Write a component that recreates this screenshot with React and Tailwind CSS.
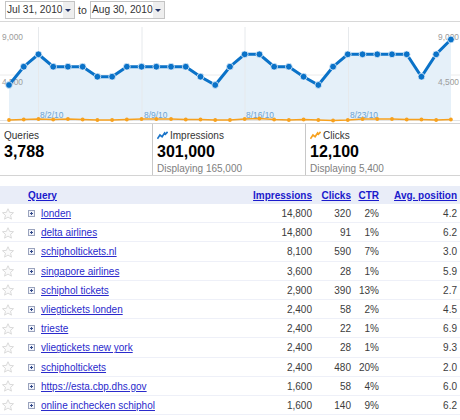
const xs = Array.from({ length: 31 }, (_, i) => 9 + i * 14.73);
const blueY = [85, 66.7, 54.3, 66.7, 66.7, 66.7, 76.7, 76.7, 66.7, 66.7, 66.7, 66.7, 66.7, 76.7, 85, 66.7, 54.3, 54.3, 66.7, 66.7, 76.7, 85, 66.7, 54.3, 54.3, 54.3, 54.3, 54.3, 76.7, 54.3, 39.5];
const orangeY = [120, 119.5, 119, 119.5, 119, 119.5, 120, 120, 119.5, 119, 119, 119, 119.5, 119.5, 120, 120, 119, 118.5, 119.5, 120, 119.5, 120, 120.5, 120, 119, 119, 119, 119.5, 119.5, 120, 119.5];

const rows = [
  ["londen", "14,800", "320", "2%", "4.2"],
  ["delta airlines", "14,800", "91", "1%", "6.2"],
  ["schipholtickets.nl", "8,100", "590", "7%", "3.0"],
  ["singapore airlines", "3,600", "28", "1%", "5.9"],
  ["schiphol tickets", "2,900", "390", "13%", "2.7"],
  ["vliegtickets londen", "2,400", "58", "2%", "4.5"],
  ["trieste", "2,400", "22", "1%", "6.9"],
  ["vliegtickets new york", "2,400", "28", "1%", "9.3"],
  ["schipholtickets", "2,400", "480", "20%", "2.0"],
  ["https://esta.cbp.dhs.gov", "1,600", "58", "4%", "6.0"],
  ["online inchecken schiphol", "1,600", "140", "9%", "6.2"],
];

function DateSelect({ label, w }) {
  return (
    <div className={`flex h-[18px] items-center border border-[#c4c4c4] bg-[#f6f6f6] ${w}`}>
      <span className="flex-1 whitespace-nowrap bg-white pl-[1px] text-[10.2px] leading-[16px] text-[#333]">{label}</span>
      <span className="flex h-full w-[12px] items-center justify-center bg-[#eeeeee]">
        <span className="h-0 w-0 border-x-[3px] border-t-[3px] border-x-transparent border-t-[#223366]" />
      </span>
    </div>
  );
}

function Chart() {
  const toPts = (arr) => xs.map((x, i) => `${x},${arr[i] - 22}`).join(" ");
  return (
    <svg width="460" height="101" className="block" style={{ fontFamily: "Liberation Sans, Arial, sans-serif" }}>
      <line x1="0" x2="460" y1="53" y2="53" stroke="#ececec" />
      <line x1="0" x2="460" y1="98.5" y2="98.5" stroke="#e4e4e4" />
      <polygon points={`9,98 ${toPts(blueY)} 451,98`} fill="#e5f0f9" />
      {[38.5, 142, 245, 348.5].map((x) => (
        <line key={x} x1={x} x2={x} y1="5" y2="99" stroke="#e6e9ec" />
      ))}
      <g fontSize="8.4" fill="#9c9c9c">
        <text x="2" y="18">9,000</text>
        <text x="2" y="63">4,500</text>
        <text x="438" y="18">9,000</text>
        <text x="438" y="63">4,500</text>
      </g>
      <g fontSize="8.4" fill="#6aa3d4">
        <text x="40" y="96">8/2/10</text>
        <text x="144" y="96">8/9/10</text>
        <text x="246" y="96">8/16/10</text>
        <text x="350" y="96">8/23/10</text>
      </g>
      <polyline points={toPts(blueY)} fill="none" stroke="#0a72c8" strokeWidth="3" />
      {xs.map((x, i) => (
        <circle key={i} cx={x} cy={blueY[i] - 22} r="3.4" fill="#0a72c8" stroke="#eaf3fb" strokeWidth="0.8" />
      ))}
      <polyline points={toPts(orangeY)} fill="none" stroke="#f7a11e" strokeWidth="1.5" />
      {xs.map((x, i) => (
        <circle key={i} cx={x} cy={orangeY[i] - 22} r="1.9" fill="#f7a11e" />
      ))}
    </svg>
  );
}

function Spark({ color }) {
  return (
    <svg width="11" height="9" viewBox="0 0 13 10" className="mr-[2px] shrink-0">
      <polyline points="0.5,9 3.5,4.5 6,6.5 9,2 10,3.5 12.5,0.8" fill="none" stroke={color} strokeWidth="2" />
    </svg>
  );
}

function Tile({ title, value, sub, icon }) {
  return (
    <div className="flex h-full flex-col">
      <div className="flex h-[17px] items-center text-[10px] leading-[17px] text-[#333]">
        {icon}
        {title}
      </div>
      <div className="text-[16px] font-bold leading-[15px] text-black">{value}</div>
      {sub && <div className="mt-[2px] text-[10px] leading-[15px] text-[#808080]">{sub}</div>}
    </div>
  );
}

function Star() {
  return (
    <svg width="12" height="12" viewBox="0 0 24 24" className="shrink-0">
      <path d="M12 1.5l3.2 7.2 7.8.7-5.9 5.2 1.8 7.7L12 18.2l-6.9 4.1 1.8-7.7L1 9.4l7.8-.7z" fill="#fbfbfb" stroke="#d6d6d6" strokeWidth="1.8" />
    </svg>
  );
}

function Plus() {
  return (
    <span className="relative flex h-[7px] w-[7px] shrink-0 items-center justify-center border border-[#9aa3bd] bg-[#f2f4fa]">
      <span className="absolute h-[1px] w-[3px] bg-[#334a8a]" />
      <span className="absolute h-[3px] w-[1px] bg-[#334a8a]" />
    </span>
  );
}

export default function App() {
  return (
    <div className="h-[420px] w-[460px] overflow-hidden bg-white" style={{ fontFamily: "Liberation Sans, Arial, sans-serif" }}>
      <div className="flex h-[21px] items-start pl-[5px] pt-[1px] text-[10.5px] text-[#333]">
        <DateSelect label="Jul 31, 2010" w="w-[70px]" />
        <span className="w-[15px] text-center leading-[19px]">to</span>
        <DateSelect label="Aug 30, 2010" w="w-[75px]" />
      </div>
      <div className="border-t border-[#d8d8d8]">
        <Chart />
      </div>
      <div className="flex h-[53px] border-y border-[#d4d4d4]">
        <div className="w-[153px] border-r border-[#c8c8c8] pl-[4px] pt-[3px]">
          <Tile title="Queries" value="3,788" />
        </div>
        <div className="w-[153px] border-r border-[#c8c8c8] pl-[4px] pt-[3px]">
          <Tile title="Impressions" value="301,000" sub="Displaying 165,000" icon={<Spark color="#1a74c8" />} />
        </div>
        <div className="flex-1 pl-[4px] pt-[3px]">
          <Tile title="Clicks" value="12,100" sub="Displaying 5,400" icon={<Spark color="#f7a11e" />} />
        </div>
      </div>
      <div className="mt-[10px]">
        <div className="flex h-[18px] items-center bg-[#e9edf8] text-[10px] font-bold text-[#1a1acc]">
          <span className="w-[28px]" />
          <span className="w-[224px] underline">Query</span>
          <span className="w-[60px] text-right underline">Impressions</span>
          <span className="w-[39px] text-right underline">Clicks</span>
          <span className="w-[28px] text-right underline">CTR</span>
          <span className="w-[78px] text-right underline">Avg. position</span>
        </div>
        {rows.map((r) => (
          <div key={r[0]} className="flex h-[19.2px] items-center border-b border-[#eef0f8] pt-[1px] text-[10px] text-[#3c3c3c]">
            <span className="flex w-[28px] pl-[2px]">
              <Star />
            </span>
            <span className="flex w-[224px] items-center gap-[6px]">
              <Plus />
              <a className="text-[#2a2acc] underline">{r[0]}</a>
            </span>
            <span className="w-[60px] text-right">{r[1]}</span>
            <span className="w-[39px] text-right">{r[2]}</span>
            <span className="w-[28px] text-right">{r[3]}</span>
            <span className="w-[78px] text-right">{r[4]}</span>
          </div>
        ))}
      </div>
    </div>
  );
}
